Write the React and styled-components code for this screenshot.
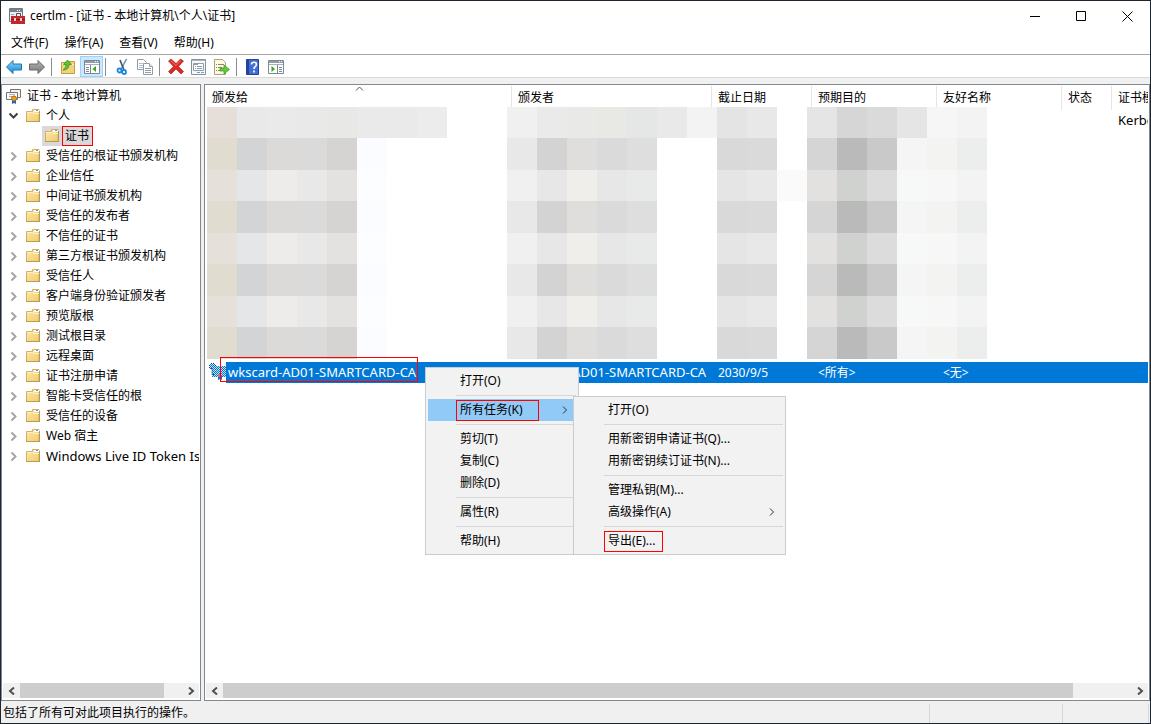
import React, { useState } from 'react';
import styled, { createGlobalStyle, css } from 'styled-components';

const GlobalStyle = createGlobalStyle`
    * { box-sizing: border-box; }
    body {
        margin: 0;
        overflow: hidden;
        font-family: "Noto Sans", "Noto Sans CJK SC", sans-serif;
        font-size: 12px;
        line-height: 20px;
        color: #000;
    }
    button {
        appearance: none;
        margin: 0;
        padding: 0;
        border: 0;
        background: transparent;
        color: inherit;
        font: inherit;
        text-align: left;
    }
    ul {
        margin: 0;
        padding: 0;
        list-style: none;
    }
    svg { display: block; flex: none; }
`

const treeItems = [
    '受信任的根证书颁发机构', '企业信任', '中间证书颁发机构', '受信任的发布者',
    '不信任的证书', '第三方根证书颁发机构', '受信任人', '客户端身份验证颁发者',
    '预览版根', '测试根目录', '远程桌面', '证书注册申请', '智能卡受信任的根',
    '受信任的设备', 'Web 宿主', 'Windows Live ID Token Issuer',
]

const columns = [
    { title: '颁发给', width: 306, sorted: true },
    { title: '颁发者', width: 200 },
    { title: '截止日期', width: 100 },
    { title: '预期目的', width: 125 },
    { title: '友好名称', width: 125 },
    { title: '状态', width: 50 },
    { title: '证书模板', width: 125 },
]

// one colour per mosaic tile, "-" leaves the tile empty
const topTiles = 'e6dfd9 e9e9e9 eaeaea e9e9e9 e8e8e6 eaeaea eaeaea ececec - - f0f0f0 eaeaea e9e9e7 e8e8e5 e5e7e6 e9e9e9 f3f3f3 e4e4e4 e8e8e8 - e5e5e5 d6d6d6 dadada e5e5e5 f6f6f6 f3f3f3'
const darkTiles = 'e0dccf d3d4d6 dbdad8 dadada d5d4d2 fbfcff - - - - e8e8e8 d3d3d3 dfdedc dadada dddedd - - d9d9d9 dadada - d5d5d5 bababa c9c9c9 f5f5f5 f3f3f1 eceeed'
const lightTiles = 'e5e0d9 e5e6e8 edecea e8e8e8 e3e2e0 fcfdff - - - - f0f0f0 e7e7e7 efeeeb e7e7e7 e8eae9 - - e5e5e5 e8e8e8 - e2e1df d0d2d0 dcdcdc f7f9f8 f7f7f7 f3f3f3'
const firstLightTiles = lightTiles.replace('e8e8e8 - e2e1df', 'e8e8e8 fafafa e2e1df')
const mosaic = [topTiles, darkTiles, firstLightTiles, darkTiles, lightTiles, darkTiles, lightTiles, darkTiles]
    .map(row => row.split(' '))

const Window = styled.div`
    position: relative;
    display: flex;
    flex-direction: column;
    height: 100vh;
    border: 1px solid #1c2530;
    background: #fff;
`
const TitleBar = styled.header`
    display: flex;
    align-items: center;
    height: 30px;
    padding-left: 8px;
    gap: 5px;
`
const Title = styled.h1`
    flex: 1;
    margin: 0;
    font-size: 12px;
    font-weight: 400;
`
const CaptionButtons = styled.div`
    display: flex;
`
const CaptionButton = styled.button`
    display: flex;
    align-items: center;
    justify-content: center;
    width: 46px;
    height: 28px;
    &:hover { background: #e5e5e5; }
`
const MenuBar = styled.nav`
    display: flex;
    height: 23px;
    padding-left: 2px;
`
const MenuBarButton = styled.button`
    padding: 0 8px;
    &:hover { background: #e5f3ff; }
`
const ToolBar = styled.div`
    display: flex;
    align-items: center;
    height: 24px;
    padding: 1px 0 0 2px;
    border-top: 1px solid #a8a8a8;
    border-bottom: 1px solid #d9d9d9;
`
const ToolButton = styled.button`
    display: flex;
    align-items: center;
    width: 23px;
    height: 21px;
    padding-left: 2px;
    border: 1px solid transparent;
    ${({ $active }) => $active && css`
        padding-left: 3px;
        border-color: #99d1ff;
        background: #cce8ff;
    `}
`
const ToolSeparator = styled.span`
    width: 1px;
    height: 18px;
    margin: 0 5px 0 2px;
    background: #8c8c8c;
`
const Workspace = styled.main`
    display: flex;
    flex: 1;
    min-height: 0;
    gap: 3px;
    padding-top: 6px;
    background: #f0f0f0;
`
const Panel = styled.section`
    display: flex;
    flex-direction: column;
    min-width: 0;
    padding: 1px;
    border: 1px solid #828790;
    background: #fff;
`
const TreePanel = styled(Panel)`
    width: 200px;
`
const ListPanel = styled(Panel)`
    flex: 1;
`
const PanelBody = styled.div`
    flex: 1;
    min-height: 0;
    overflow: hidden;
`
const TreeRow = styled.li`
    display: flex;
    align-items: center;
    height: 20px;
    padding-left: ${({ $level }) => [3, 3, 39][$level]}px;
    white-space: nowrap;
`
const TreeLabel = styled.button`
    display: flex;
    align-items: center;
    height: 20px;
    gap: ${({ $root }) => ($root ? 5 : 6)}px;
    white-space: nowrap;
    ${({ $selected }) => $selected && css`
        gap: 3px;
        padding-left: 3px;
        background: #d9d9d9;
    `}
`
const Expander = styled.button`
    width: 20px;
    height: 20px;
`
const Marked = styled.span`
    padding: 0 3px 0 2px;
    border: 1px solid #f00;
    line-height: 18px;
`
// names written wholly in Latin letters run a size larger than the Chinese ones
const LatinText = styled.span`
    font-size: 13px;
    line-height: 18px;
`
const ScrollBar = styled.div`
    display: flex;
    height: 16px;
    border-bottom: 1px solid #fff;
    background: #f0f0f0;
`
const ScrollArrow = styled.button`
    display: flex;
    align-items: center;
    justify-content: center;
    width: 17px;
`
const ScrollTrack = styled.div`
    flex: 1;
`
const ScrollThumb = styled.div`
    width: ${({ $size }) => $size}%;
    height: 100%;
    background: #cdcdcd;
`
const Table = styled.table`
    width: 1031px;
    table-layout: fixed;
    border-collapse: separate;
    border-spacing: 0;
`
const HeaderCell = styled.th`
    position: relative;
    height: 24px;
    padding: 0 0 0 6px;
    border-right: 1px solid #e5e5e5;
    font-weight: 400;
    text-align: left;
    white-space: nowrap;
`
const SortMark = styled.svg`
    position: absolute;
    top: 0;
    left: calc(50% - 4px);
`
const MosaicCell = styled.td`
    height: 252px;
    padding: 0;
    vertical-align: top;
`
const Mosaic = styled.div`
    position: relative;
    display: grid;
    grid-template-columns: repeat(26, 30px);
    grid-template-rows: repeat(4, 31px 32px);
    margin: -3px 0 0 1px;
`
const Tile = styled.span`
    background: ${({ $color }) => ($color === '-' ? 'transparent' : `#${$color}`)};
`
const Cell = styled.td`
    padding: 1px 0 0 6px;
    vertical-align: top;
    white-space: nowrap;
    ${({ $selected }) => $selected && css`
        background: #0078d7;
        color: #fff;
    `}
`
const NameCell = styled.td`
    position: relative;
    padding: 0 0 0 20px;
    vertical-align: top;
`
const NameText = styled.div`
    height: 21px;
    padding: 1px 0 0 2px;
    background: #0078d7;
    color: #fff;
`
const RowIcon = styled.svg`
    position: absolute;
    top: 1px;
    left: 3px;
`
const RowMark = styled.span`
    position: absolute;
    top: -5px;
    left: 14px;
    width: 198px;
    height: 25px;
    border: 1px solid #f00;
`
const Popup = styled.ul`
    position: absolute;
    top: ${({ $top }) => $top}px;
    left: ${({ $left }) => $left}px;
    width: ${({ $width }) => $width}px;
    padding: 2px;
    border: 1px solid #ccc;
    background: #f2f2f2;
`
const PopupItem = styled.button`
    display: flex;
    align-items: center;
    justify-content: space-between;
    width: 100%;
    height: 22px;
    padding: 0 8px 0 ${({ $marked }) => ($marked ? 28 : 32)}px;
    background: ${({ $open }) => ($open ? '#91c9f7' : 'transparent')};
`
const PopupMark = styled.span`
    height: 21px;
    padding: 0 ${({ $wide }) => ($wide ? 15 : 6)}px 0 3px;
    border: 1px solid #f00;
    line-height: 18px;
`
const PopupSeparator = styled.li`
    height: 1px;
    margin: 3px 0 3px 28px;
    background: #d7d7d7;
`
const StatusBar = styled.footer`
    display: flex;
    align-items: center;
    height: 22px;
    padding: 2px 1px 0 2px;
    background: #f0f0f0;
`
const StatusText = styled.span`
    flex: 1;
`
const StatusSlot = styled.span`
    width: ${({ $width }) => $width}px;
    height: 19px;
    border-left: 1px solid #d7d7d7;
    &:last-child { border-right: 1px solid #d7d7d7; }
`

const AppIcon = () => (
    <svg width="16" height="16" viewBox="0 0 16 16">
        <path d="M.5.5h13v13H.5z" fill="#eceff1" stroke="#6e7a85" />
        <path d="M1 1h12v3H1z" fill="#75828e" />
        <path d="M8 2h1v1H8zM10 2h1v1h-1z" fill="#fff" />
        <path d="M2 6.500h3M2 8.500h1M2 10.500h1" stroke="#9ba5ad" />
        <path d="M7.500 8V5.500h4V8" fill="none" stroke="#6b4545" />
        <path d="M2 8h14v8H2z" fill="#c5282c" />
        <path d="M2 11h14v1H2z" fill="#8a1519" />
        <path d="M5 10h2v3H5zM11 10h2v3h-2z" fill="#e8d6d6" />
    </svg>
)

const FolderIcon = () => (
    <svg width="14" height="14" viewBox="0 0 14 14">
        <defs>
            <linearGradient id="folderFill" x1="0" y1="0" x2="1" y2="1">
                <stop offset="0" stopColor="#ffe9a6" />
                <stop offset="1" stopColor="#efcb72" />
            </linearGradient>
        </defs>
        <path d="M.5 12.500v-10h6v-2h6.500v12z" fill="url(#folderFill)" stroke="#d3b066" />
        <path d="M8 1h5v2H8z" fill="#fff" />
        <path d="M10 1h2v1h-2z" fill="#4b9be0" />
        <path d="M1 3.500h5.500l1 1h5.500" fill="none" stroke="#fff3c9" />
        <path d="M13.500 2v11M0 12.500h14" stroke="#bd9a4e" />
    </svg>
)

const CertStoreIcon = () => (
    <svg width="16" height="16" viewBox="0 0 16 16">
        <path d="M4.500 1.500h10v8h-10z" fill="#f4f2ec" stroke="#77736c" />
        <path d="M.5 4.500h11v7H.5z" fill="#fbfaf6" stroke="#77736c" />
        <path d="M3 6.500h6M3 8.500h3" stroke="#a5b1cf" />
        <path d="M6 11v5l2-1 2 1v-5z" fill="#2560c5" />
        <circle cx="8" cy="10.500" r="2.500" fill="#e5a31a" stroke="#a96f0b" />
    </svg>
)

const SelectedCertIcon = () => (
    <RowIcon width="17" height="18" viewBox="0 0 17 18">
        <defs>
            <pattern id="dither" width="2" height="2" patternUnits="userSpaceOnUse">
                <path d="M0 0h1v1H0zM1 1h1v1H1z" fill="#0078d7" />
            </pattern>
        </defs>
        <path d="M1 1h5v5H1zM3 3h14v11H3z" fill="#c9dce8" />
        <path d="M1 1h5v5H1zM3 3h14v11H3z" fill="url(#dither)" />
        <path d="M2 .5h4M.5 2v3M6.500 2v2M2 5.500h1v6h3" fill="none" stroke="#173f5c" strokeDasharray="1 1" />
        <path d="M9 13h4v4l-2-1-2 1z" fill="#0d6fd1" />
        <path d="M9 11h3v3H9z" fill="#c77a3a" />
    </RowIcon>
)

const Chevron = ({ open }) => (
    <svg width="20" height="20" viewBox="0 0 20 20" fill="none">
        {open
            ? <path d="M3.500 7.500l4 4 4-4" stroke="#404040" strokeWidth="2" />
            : <path d="M5.500 6.500l4 4-4 4" stroke="#a6a6a6" strokeWidth="2" />}
    </svg>
)

const ScrollChevron = ({ left }) => (
    <svg width="8" height="8" viewBox="0 0 8 8" fill="none" stroke="#505050" strokeWidth="2">
        <path d={left ? 'M6 0.500L2 4l4 3.500' : 'M2 0.500L6 4 2 7.500'} />
    </svg>
)

const SubmenuArrow = () => (
    <svg width="6" height="8" viewBox="0 0 6 8" fill="none" stroke="#333">
        <path d="M1 .5L4.500 4 1 7.500" />
    </svg>
)

const ArrowIcon = ({ forward }) => (
    <svg width="17" height="16" viewBox="0 0 17 16">
        <defs>
            <linearGradient id="blueArrow" x1="0" y1="0" x2="0" y2="1">
                <stop offset="0" stopColor="#8bd6fb" />
                <stop offset="1" stopColor="#1687d4" />
            </linearGradient>
            <linearGradient id="greyArrow" x1="0" y1="0" x2="0" y2="1">
                <stop offset="0" stopColor="#b5b5b5" />
                <stop offset="1" stopColor="#777" />
            </linearGradient>
        </defs>
        {forward
            ? <path d="M15.500 8L9 1.500v3.500H.5v6H9v3.500z" fill="url(#greyArrow)" stroke="#686868" />
            : <path d="M.5 8L7 1.500v3.500h8.500v6H7v3.500z" fill="url(#blueArrow)" stroke="#2274ad" />}
    </svg>
)

const UpFolderIcon = () => (
    <svg width="16" height="16" viewBox="0 0 16 16">
        <path d="M1.500 14.500v-11h6l1-1h6v12z" fill="#f3d27c" stroke="#c39c48" />
        <path d="M2 5.500h12" stroke="#fff0bd" />
        <path d="M3 11c4 0 6-2 6-5.500h2.500L7.500 1 3.500 5.500H6c0 2.500-1 4-3 5.500z" fill="#58c62d" stroke="#2f8b18" strokeWidth=".7" />
    </svg>
)

// console window with a pane on either side
const PaneIcon = ({ right }) => (
    <svg width="16" height="14" viewBox="0 0 16 14">
        <path d="M.5.5h15v13H.5z" fill="#fff" stroke="#7b8793" />
        <path d="M1 1h14v2H1z" fill="#929da7" />
        <path d="M11 1.500h1M13 1.500h1" stroke="#fff" />
        <path d="M1 4.500h14" stroke="#a8b0b7" />
        <path d={right ? 'M9.500 5v8' : 'M6.500 5v8'} stroke="#7b8793" />
        <path d={right ? 'M11 7.500h3M11 9.500h3M11 11.500h3' : 'M2 7.500h3M2 9.500h3M2 11.500h3'} stroke="#7b8793" />
        {right
            ? <path d="M3.500 6v6L7 9z" fill="#36a51c" />
            : <path d="M12 6v6L8.500 9z" fill="#36a51c" />}
    </svg>
)

const CutIcon = () => (
    <svg width="16" height="16" viewBox="0 0 16 16" fill="none">
        <path d="M12.500 0L7 10.500" stroke="#7595b2" strokeWidth="1.600" />
        <path d="M6 1l4 10" stroke="#38536e" strokeWidth="1.600" />
        <circle cx="5.500" cy="11.500" r="2" stroke="#1689dc" strokeWidth="1.800" />
        <circle cx="10" cy="13" r="2" stroke="#1689dc" strokeWidth="1.800" />
    </svg>
)

const CopyIcon = () => (
    <svg width="16" height="16" viewBox="0 0 16 16" fill="#fff" stroke="#929da7">
        <path d="M.5.5h6l3 3v7h-9z" />
        <path d="M2 4.500h4M2 6.500h5M2 8.500h4" stroke="#b5bec6" />
        <path d="M6.500 4.500h6l3 3v8h-9z" />
        <path d="M12.500 4.500v3h3M8 9.500h6M8 11.500h6M8 13.500h6" />
    </svg>
)

const DeleteIcon = () => (
    <svg width="17" height="17" viewBox="0 0 17 17">
        <path d="M.5 3L3 1l5 4.500L12.500 1l3 2-5 5.500 5 5L13 16l-5-5-5 5-2.500-2.500 5-5z" fill="#dc2b23" stroke="#a81712" strokeWidth=".6" />
        <path d="M2.500 2.500l5.500 5 4.500-5" fill="none" stroke="#f38078" strokeWidth=".8" />
    </svg>
)

const PropertiesIcon = () => (
    <svg width="16" height="16" viewBox="0 0 16 16">
        <path d="M.5.5h14v15H.5z" fill="#f7f8f9" stroke="#86919b" />
        <path d="M1 1.500h13" stroke="#aeb6bd" />
        <path d="M2.500 4.500h10v7h-10z" fill="#fff" stroke="#929da7" />
        <path d="M3 5.500h4M4 7.500h1M6 7.500h5M4 9.500h1M6 9.500h5" stroke="#929da7" />
        <path d="M6 13.500h3" stroke="#37b4e4" />
        <path d="M10 13.500h3" stroke="#929da7" />
    </svg>
)

const ExportIcon = () => (
    <svg width="17" height="16" viewBox="0 0 17 16">
        <path d="M.5.500h8l3 3v12h-11z" fill="#fff9dd" stroke="#aaa180" />
        <path d="M2 5.500h1M4 5.500h6M2 8.500h1M4 8.500h4M2 11.500h1M4 11.500h5" stroke="#8a8773" />
        <path d="M6 9h4V6l5.500 4.500L10 15v-3H6z" fill="#64c938" stroke="#3a991d" strokeWidth=".7" />
    </svg>
)

const HelpIcon = () => (
    <svg width="15" height="16" viewBox="0 0 15 16">
        <path d="M1.500.5h12v15h-12z" fill="#3f6fd0" stroke="#25459a" />
        <path d="M2 1h2v14H2z" fill="#23439b" />
        <path d="M6.500 5.500C6.500 2.500 11.500 2.500 11.500 5.500 11.500 7.500 9 7.500 9 10M9 11.500v2" fill="none" stroke="#fff" strokeWidth="1.700" />
    </svg>
)

const toolGroups = [
    [{ label: '后退', icon: <ArrowIcon /> }, { label: '前进', icon: <ArrowIcon forward /> }],
    [{ label: '向上', icon: <UpFolderIcon /> }, { label: '控制台树', icon: <PaneIcon />, active: true }],
    [{ label: '剪切', icon: <CutIcon /> }, { label: '复制', icon: <CopyIcon /> }],
    [{ label: '删除', icon: <DeleteIcon /> }, { label: '属性', icon: <PropertiesIcon /> }, { label: '导出列表', icon: <ExportIcon /> }],
    [{ label: '帮助', icon: <HelpIcon /> }, { label: '操作窗格', icon: <PaneIcon right /> }],
]

// null draws a separator line
const contextMenu = [
    { label: '打开(O)' }, null,
    { label: '所有任务(K)', submenu: true, open: true, marked: true }, null,
    { label: '剪切(T)' }, { label: '复制(C)' }, { label: '删除(D)' }, null,
    { label: '属性(R)' }, null,
    { label: '帮助(H)' },
]
const taskMenu = [
    { label: '打开(O)' }, null,
    { label: '用新密钥申请证书(Q)...' }, { label: '用新密钥续订证书(N)...' }, null,
    { label: '管理私钥(M)...' }, { label: '高级操作(A)', submenu: true }, null,
    { label: '导出(E)...', marked: true },
]

const PopupMenu = ({ items, label, ...place }) => (
    <Popup aria-label={label} {...place}>
        {items.map((item, i) => item
            ? (
                <li key={i}>
                    <PopupItem $open={item.open} $marked={item.marked}>
                        {item.marked ? <PopupMark $wide={item.submenu}>{item.label}</PopupMark> : item.label}
                        {item.submenu && <SubmenuArrow />}
                    </PopupItem>
                </li>
            )
            : <PopupSeparator key={i} role="separator" />
        )}
    </Popup>
)

const HorizontalScroll = ({ size }) => (
    <ScrollBar>
        <ScrollArrow aria-label="向左滚动"><ScrollChevron left /></ScrollArrow>
        <ScrollTrack><ScrollThumb $size={size} /></ScrollTrack>
        <ScrollArrow aria-label="向右滚动"><ScrollChevron /></ScrollArrow>
    </ScrollBar>
)

const isLatin = name => /^[\w\s-]+$/.test(name)

const CertificateTree = () => {
    const [open, setOpen] = useState(true)
    return (
        <TreePanel>
            <PanelBody>
                <ul>
                    <TreeRow $level={0}>
                        <TreeLabel $root><CertStoreIcon />证书 - 本地计算机</TreeLabel>
                    </TreeRow>
                    <TreeRow $level={1}>
                        <Expander aria-label="个人" aria-expanded={open} onClick={() => setOpen(!open)}>
                            <Chevron open={open} />
                        </Expander>
                        <TreeLabel><FolderIcon />个人</TreeLabel>
                    </TreeRow>
                    {open &&
                    <TreeRow $level={2}>
                        <TreeLabel $selected><FolderIcon /><Marked>证书</Marked></TreeLabel>
                    </TreeRow>}
                    {treeItems.map(name => (
                        <TreeRow key={name} $level={1}>
                            <Expander aria-label={name}><Chevron /></Expander>
                            <TreeLabel>
                                <FolderIcon />
                                {isLatin(name) ? <LatinText>{name}</LatinText> : name}
                            </TreeLabel>
                        </TreeRow>
                    ))}
                </ul>
            </PanelBody>
            <HorizontalScroll size={89} />
        </TreePanel>
    )
}

const CertificateList = () => (
    <ListPanel>
        <PanelBody>
            <Table>
                <colgroup>
                    {columns.map(c => <col key={c.title} width={c.width} />)}
                </colgroup>
                <thead>
                    <tr>
                        {columns.map(c => (
                            <HeaderCell key={c.title} scope="col">
                                {c.title}
                                {c.sorted &&
                                <SortMark width="9" height="5" viewBox="0 0 9 5" fill="none" stroke="#555">
                                    <path d="M1 4.500l3.500-3.500L8 4.500" />
                                </SortMark>}
                            </HeaderCell>
                        ))}
                    </tr>
                </thead>
                <tbody>
                    <tr>
                        <MosaicCell colSpan={6}>
                            <Mosaic>
                                {mosaic.map((row, y) => row.map((color, x) => (
                                    <Tile key={`${y}-${x}`} $color={color} />
                                )))}
                            </Mosaic>
                        </MosaicCell>
                        <Cell><LatinText>Kerberos</LatinText></Cell>
                    </tr>
                    <tr>
                        <NameCell>
                            <SelectedCertIcon />
                            <NameText><LatinText>wkscard-AD01-SMARTCARD-CA</LatinText></NameText>
                            <RowMark />
                        </NameCell>
                        <Cell $selected><LatinText>wkscard-AD01-SMARTCARD-CA</LatinText></Cell>
                        <Cell $selected>2030/9/5</Cell>
                        <Cell $selected>&lt;所有&gt;</Cell>
                        <Cell $selected>&lt;无&gt;</Cell>
                        <Cell $selected />
                        <Cell $selected />
                    </tr>
                </tbody>
            </Table>
        </PanelBody>
        <HorizontalScroll size={93.6} />
    </ListPanel>
)

const App = () => (
    <>
        <GlobalStyle />
        <Window>
            <TitleBar>
                <AppIcon />
                <Title>certlm - [证书 - 本地计算机\个人\证书]</Title>
                <CaptionButtons>
                    <CaptionButton aria-label="最小化">
                        <svg width="11" height="11" viewBox="0 0 11 11" stroke="#000"><path d="M0 5.500h10" /></svg>
                    </CaptionButton>
                    <CaptionButton aria-label="最大化">
                        <svg width="11" height="11" viewBox="0 0 11 11" fill="none" stroke="#000"><path d="M.5.5h9v9h-9z" /></svg>
                    </CaptionButton>
                    <CaptionButton aria-label="关闭">
                        <svg width="11" height="11" viewBox="0 0 11 11" stroke="#000"><path d="M.5.5l10 10M10.500.5l-10 10" /></svg>
                    </CaptionButton>
                </CaptionButtons>
            </TitleBar>
            <MenuBar>
                {['文件(F)', '操作(A)', '查看(V)', '帮助(H)'].map(m => <MenuBarButton key={m}>{m}</MenuBarButton>)}
            </MenuBar>
            <ToolBar>
                {toolGroups.map((group, i) => (
                    <React.Fragment key={i}>
                        {i > 0 && <ToolSeparator />}
                        {group.map(t => (
                            <ToolButton key={t.label} aria-label={t.label} $active={t.active}>{t.icon}</ToolButton>
                        ))}
                    </React.Fragment>
                ))}
            </ToolBar>
            <Workspace>
                <CertificateTree />
                <CertificateList />
            </Workspace>
            <StatusBar>
                <StatusText>包括了所有可对此项目执行的操作。</StatusText>
                <StatusSlot $width={133} />
                <StatusSlot $width={87} />
            </StatusBar>
            <PopupMenu items={contextMenu} label="操作" $top={366} $left={424} $width={154} />
            <PopupMenu items={taskMenu} label="所有任务" $top={395} $left={572} $width={213} />
        </Window>
    </>
)

export default App;
